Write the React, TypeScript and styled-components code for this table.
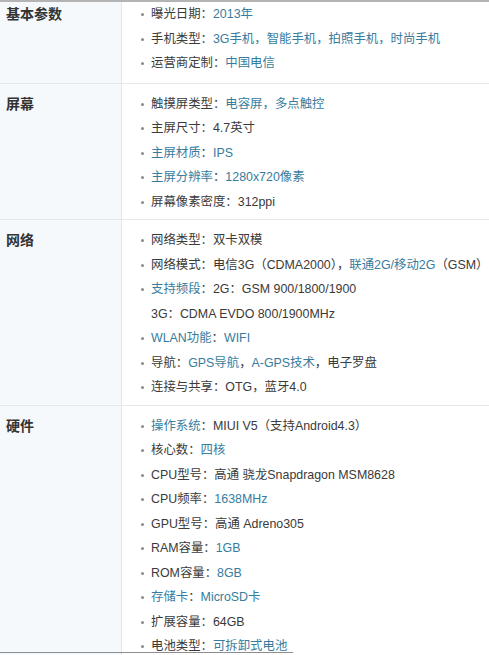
import styled, { createGlobalStyle } from 'styled-components';

const Global = createGlobalStyle`
  html, body {
    margin: 0;
    padding: 0;
    background: #fff;
  }
  body {
    font-family: "Liberation Sans", Arial, "Noto Sans CJK SC", sans-serif;
    font-size: 12px;
    color: #333;
  }
`;

const Page = styled.div`
  position: relative;
  width: 489px;
  height: 655px;
  overflow: hidden;
  border-top: 2px solid #b4b4b4;
  box-sizing: border-box;
`;

const Row = styled.div`
  display: grid;
  grid-template-columns: 122px 1fr;
  border-bottom: 1px solid #e6e9ec;
`;

const Head = styled.div<{ $first?: boolean }>`
  background: #f6f9fc;
  border-right: 1px solid #e3e7eb;
  padding: ${(p) => (p.$first ? '0 0 7px 6px' : '8px 0 5px 6px')};
  font-family: "Liberation Sans", "Noto Sans CJK SC", sans-serif;
  font-size: 14px;
  font-weight: bold;
  color: #333;
  line-height: 24.5px;
`;

const List = styled.ul<{ $first?: boolean }>`
  list-style: none;
  margin: 0;
  padding: ${(p) => (p.$first ? '0 0 7px 29px' : '8px 0 5px 29px')};
  font-size: 12.4px;
`;

const Item = styled.li<{ $plain?: boolean }>`
  position: relative;
  line-height: 24.5px;
  white-space: nowrap;
  color: #3a3a3a;

  &::before {
    content: '';
    display: ${(p) => (p.$plain ? 'none' : 'block')};
    position: absolute;
    left: -10px;
    top: 11px;
    width: 3px;
    height: 3px;
    border-radius: 50%;
    background: #8a8a8a;
  }
`;

const Link = styled.span`
  color: #377c9e;
`;

const BottomRule = styled.div`
  position: absolute;
  left: 0;
  bottom: 2px;
  width: 293px;
  height: 1px;
  background: #8c8c8c;
`;

const App = () => {
  return (
    <>
      <Global />
      <Page>
        <Row>
          <Head $first>基本参数</Head>
          <List $first>
            <Item>曝光日期：<Link>2013年</Link></Item>
            <Item>手机类型：<Link>3G手机，智能手机，拍照手机，时尚手机</Link></Item>
            <Item>运营商定制：<Link>中国电信</Link></Item>
          </List>
        </Row>

        <Row>
          <Head>屏幕</Head>
          <List>
            <Item>触摸屏类型：<Link>电容屏，多点触控</Link></Item>
            <Item>主屏尺寸：4.7英寸</Item>
            <Item><Link>主屏材质</Link>：<Link>IPS</Link></Item>
            <Item><Link>主屏分辨率</Link>：<Link>1280x720像素</Link></Item>
            <Item>屏幕像素密度：312ppi</Item>
          </List>
        </Row>

        <Row>
          <Head>网络</Head>
          <List>
            <Item>网络类型：双卡双模</Item>
            <Item>网络模式：电信3G（CDMA2000），<Link>联通2G/移动2G</Link>（GSM）</Item>
            <Item><Link>支持频段</Link>：2G：GSM 900/1800/1900</Item>
            <Item $plain>3G：CDMA EVDO 800/1900MHz</Item>
            <Item><Link>WLAN功能</Link>：<Link>WIFI</Link></Item>
            <Item>导航：<Link>GPS导航</Link>，<Link>A-GPS技术</Link>，电子罗盘</Item>
            <Item>连接与共享：OTG，蓝牙4.0</Item>
          </List>
        </Row>

        <Row>
          <Head>硬件</Head>
          <List>
            <Item><Link>操作系统</Link>：MIUI V5（支持Android4.3）</Item>
            <Item>核心数：<Link>四核</Link></Item>
            <Item>CPU型号：高通 骁龙Snapdragon MSM8628</Item>
            <Item>CPU频率：<Link>1638MHz</Link></Item>
            <Item>GPU型号：高通 Adreno305</Item>
            <Item>RAM容量：<Link>1GB</Link></Item>
            <Item>ROM容量：<Link>8GB</Link></Item>
            <Item><Link>存储卡</Link>：<Link>MicroSD卡</Link></Item>
            <Item>扩展容量：64GB</Item>
            <Item>电池类型：<Link>可拆卸式电池</Link></Item>
          </List>
        </Row>
        <BottomRule />
      </Page>
    </>
  );
};

export default App;
